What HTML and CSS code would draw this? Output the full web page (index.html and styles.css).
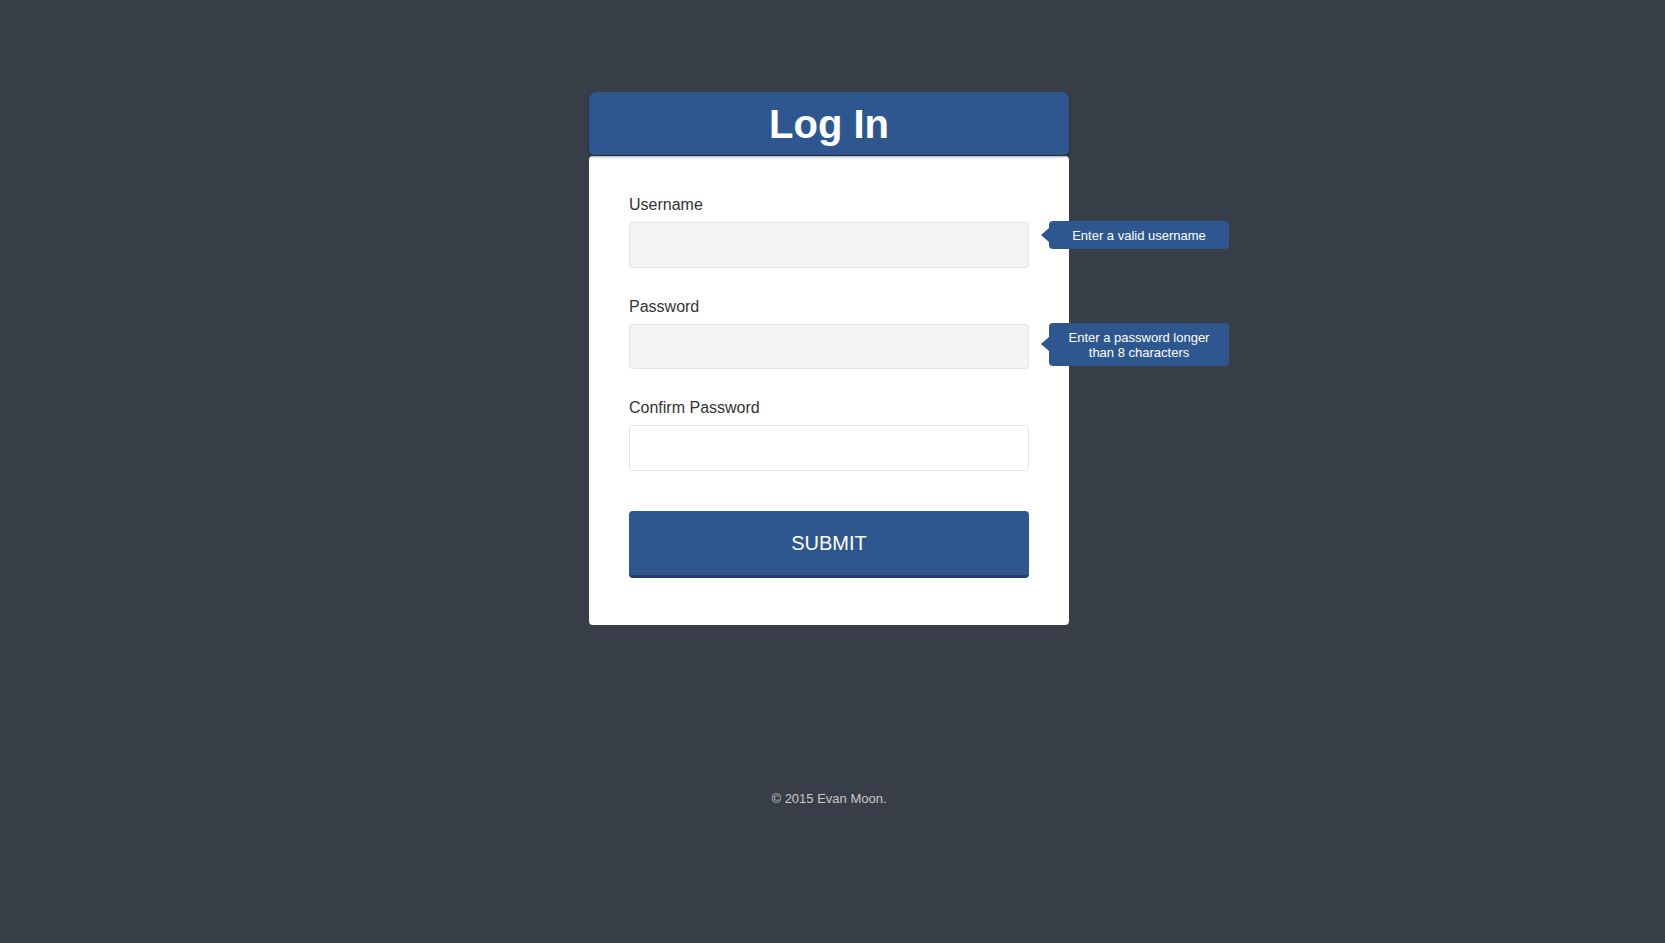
FILE: index.html
```html
<!DOCTYPE html>
<html lang="en">
<head>
<meta charset="utf-8">
<title>Log In</title>
<link rel="stylesheet" href="styles.css">
</head>
<body>
<div class="page">
  <div class="login">
    <h1 class="login-title">Log In</h1>
    <form class="login-card">
      <div class="field">
        <label class="field-label">Username</label>
        <div class="field-control">
          <input class="field-input is-invalid" type="text">
          <div class="tip">Enter a valid username</div>
        </div>
      </div>
      <div class="field">
        <label class="field-label">Password</label>
        <div class="field-control">
          <input class="field-input is-invalid" type="password">
          <div class="tip">Enter a password longer than 8 characters</div>
        </div>
      </div>
      <div class="field">
        <label class="field-label">Confirm Password</label>
        <div class="field-control">
          <input class="field-input" type="password">
        </div>
      </div>
      <button class="submit" type="button">SUBMIT</button>
    </form>
  </div>
  <footer class="footer">&copy; 2015 Evan Moon.</footer>
</div>
</body>
</html>
```
FILE: styles.css
```css
* { box-sizing: border-box; }
html, body {
  margin: 0;
  padding: 0;
  height: 100%;
  background: #373e47;
  font-family: "Liberation Sans", Arial, sans-serif;
}
.page {
  display: flex;
  flex-direction: column;
  align-items: center;
  padding: 92px 7px 0 0;
}
.login {
  width: 480px;
  display: flex;
  flex-direction: column;
}
.login-title {
  margin: 0;
  height: 63px;
  line-height: 63px;
  padding-top: 1px;
  background: #2e5790;
  color: #fff;
  text-align: center;
  font-size: 40px;
  font-weight: bold;
  border-radius: 8px 8px 5px 5px;
  box-shadow: 0 2px 3px rgba(0, 0, 0, 0.35);
  position: relative;
  z-index: 1;
}
.login-card {
  margin-top: 1px;
  background: #fff;
  border-radius: 4px;
  padding: 40px 40px 47px;
  display: flex;
  flex-direction: column;
}
.field {
  display: flex;
  flex-direction: column;
  gap: 8px;
  margin-bottom: 30px;
}
.field-label {
  font-size: 16px;
  line-height: 18px;
  color: #333;
}
.field-control {
  position: relative;
}
.field-input {
  display: block;
  width: 100%;
  height: 45.5px;
  border: 1px solid #e4e4e4;
  border-radius: 4px;
  background: #fff;
  font-family: inherit;
  font-size: 16px;
  padding: 0 12px;
  outline: none;
}
.field-input.is-invalid {
  background: #f4f4f4;
}
.tip {
  position: absolute;
  left: 420px;
  top: -1px;
  width: 180px;
  padding: 7px 10px 6px;
  background: #2e5790;
  color: #fff;
  font-size: 13px;
  line-height: 15px;
  text-align: center;
  border-radius: 4px;
}
.tip::before {
  content: "";
  position: absolute;
  left: -8px;
  top: 50%;
  margin-top: -7px;
  border-style: solid;
  border-width: 7px 8px 7px 0;
  border-color: transparent #2e5790 transparent transparent;
}
.submit {
  margin-top: 10px;
  height: 67px;
  border: 0;
  border-bottom: 3px solid #223f6b;
  border-radius: 4px;
  background: #2e5790;
  color: #fff;
  font-family: inherit;
  font-size: 20px;
  padding: 1px 0 0;
  cursor: pointer;
}
.footer {
  margin-top: 166px;
  color: #c9c9c9;
  font-size: 13px;
  line-height: 15px;
}
```
